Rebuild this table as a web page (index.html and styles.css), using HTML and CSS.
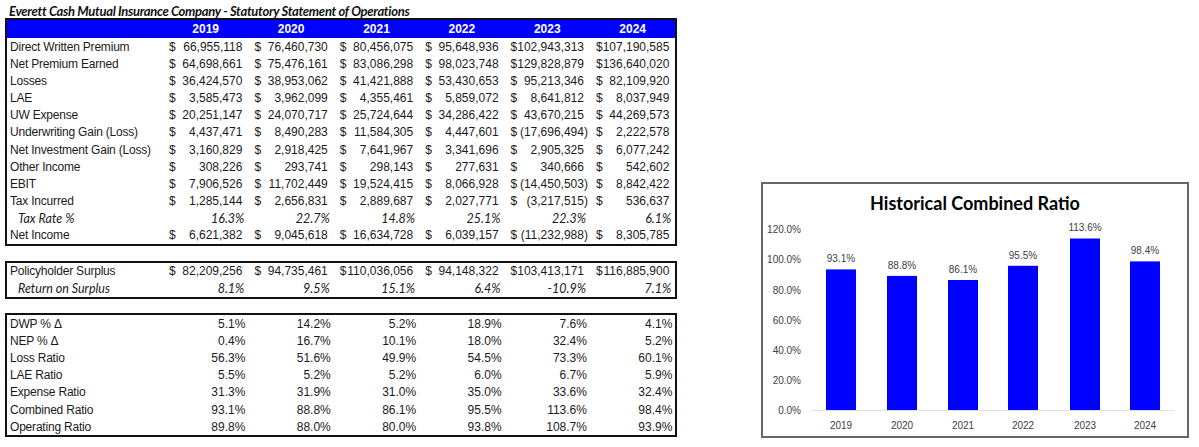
FILE: index.html
```html
<!DOCTYPE html>
<html>
<head>
<meta charset="utf-8">
<link rel="stylesheet" href="styles.css">
</head>
<body>
<div class="page">
  <div class="left">
    <h1 class="title">Everett Cash Mutual Insurance Company - Statutory Statement of Operations</h1>

    <div class="tbl t1">
      <div class="row head"><span class="lbl"></span><span>2019</span><span>2020</span><span>2021</span><span>2022</span><span>2023</span><span>2024</span></div>
      <div class="row"><span class="lbl">Direct Written Premium</span><span class="cur"><i>$</i><b>66,955,118</b></span><span class="cur"><i>$</i><b>76,460,730</b></span><span class="cur"><i>$</i><b>80,456,075</b></span><span class="cur"><i>$</i><b>95,648,936</b></span><span class="cur"><i>$</i><b>102,943,313</b></span><span class="cur"><i>$</i><b>107,190,585</b></span></div>
      <div class="row"><span class="lbl">Net Premium Earned</span><span class="cur"><i>$</i><b>64,698,661</b></span><span class="cur"><i>$</i><b>75,476,161</b></span><span class="cur"><i>$</i><b>83,086,298</b></span><span class="cur"><i>$</i><b>98,023,748</b></span><span class="cur"><i>$</i><b>129,828,879</b></span><span class="cur"><i>$</i><b>136,640,020</b></span></div>
      <div class="row"><span class="lbl">Losses</span><span class="cur"><i>$</i><b>36,424,570</b></span><span class="cur"><i>$</i><b>38,953,062</b></span><span class="cur"><i>$</i><b>41,421,888</b></span><span class="cur"><i>$</i><b>53,430,653</b></span><span class="cur"><i>$</i><b>95,213,346</b></span><span class="cur"><i>$</i><b>82,109,920</b></span></div>
      <div class="row"><span class="lbl">LAE</span><span class="cur"><i>$</i><b>3,585,473</b></span><span class="cur"><i>$</i><b>3,962,099</b></span><span class="cur"><i>$</i><b>4,355,461</b></span><span class="cur"><i>$</i><b>5,859,072</b></span><span class="cur"><i>$</i><b>8,641,812</b></span><span class="cur"><i>$</i><b>8,037,949</b></span></div>
      <div class="row"><span class="lbl">UW Expense</span><span class="cur"><i>$</i><b>20,251,147</b></span><span class="cur"><i>$</i><b>24,070,717</b></span><span class="cur"><i>$</i><b>25,724,644</b></span><span class="cur"><i>$</i><b>34,286,422</b></span><span class="cur"><i>$</i><b>43,670,215</b></span><span class="cur"><i>$</i><b>44,269,573</b></span></div>
      <div class="row"><span class="lbl">Underwriting Gain (Loss)</span><span class="cur"><i>$</i><b>4,437,471</b></span><span class="cur"><i>$</i><b>8,490,283</b></span><span class="cur"><i>$</i><b>11,584,305</b></span><span class="cur"><i>$</i><b>4,447,601</b></span><span class="cur"><i>$</i><b class="neg">(17,696,494)</b></span><span class="cur"><i>$</i><b>2,222,578</b></span></div>
      <div class="row"><span class="lbl">Net Investment Gain (Loss)</span><span class="cur"><i>$</i><b>3,160,829</b></span><span class="cur"><i>$</i><b>2,918,425</b></span><span class="cur"><i>$</i><b>7,641,967</b></span><span class="cur"><i>$</i><b>3,341,696</b></span><span class="cur"><i>$</i><b>2,905,325</b></span><span class="cur"><i>$</i><b>6,077,242</b></span></div>
      <div class="row"><span class="lbl">Other Income</span><span class="cur"><i>$</i><b>308,226</b></span><span class="cur"><i>$</i><b>293,741</b></span><span class="cur"><i>$</i><b>298,143</b></span><span class="cur"><i>$</i><b>277,631</b></span><span class="cur"><i>$</i><b>340,666</b></span><span class="cur"><i>$</i><b>542,602</b></span></div>
      <div class="row"><span class="lbl">EBIT</span><span class="cur"><i>$</i><b>7,906,526</b></span><span class="cur"><i>$</i><b>11,702,449</b></span><span class="cur"><i>$</i><b>19,524,415</b></span><span class="cur"><i>$</i><b>8,066,928</b></span><span class="cur"><i>$</i><b class="neg">(14,450,503)</b></span><span class="cur"><i>$</i><b>8,842,422</b></span></div>
      <div class="row"><span class="lbl">Tax Incurred</span><span class="cur"><i>$</i><b>1,285,144</b></span><span class="cur"><i>$</i><b>2,656,831</b></span><span class="cur"><i>$</i><b>2,889,687</b></span><span class="cur"><i>$</i><b>2,027,771</b></span><span class="cur"><i>$</i><b class="neg">(3,217,515)</b></span><span class="cur"><i>$</i><b>536,637</b></span></div>
      <div class="row ital"><span class="lbl">Tax Rate %</span><span class="pct">16.3%</span><span class="pct">22.7%</span><span class="pct">14.8%</span><span class="pct">25.1%</span><span class="pct">22.3%</span><span class="pct">6.1%</span></div>
      <div class="row"><span class="lbl">Net Income</span><span class="cur"><i>$</i><b>6,621,382</b></span><span class="cur"><i>$</i><b>9,045,618</b></span><span class="cur"><i>$</i><b>16,634,728</b></span><span class="cur"><i>$</i><b>6,039,157</b></span><span class="cur"><i>$</i><b class="neg">(11,232,988)</b></span><span class="cur"><i>$</i><b>8,305,785</b></span></div>
    </div>

    <div class="tbl t2">
      <div class="row"><span class="lbl">Policyholder Surplus</span><span class="cur"><i>$</i><b>82,209,256</b></span><span class="cur"><i>$</i><b>94,735,461</b></span><span class="cur"><i>$</i><b>110,036,056</b></span><span class="cur"><i>$</i><b>94,148,322</b></span><span class="cur"><i>$</i><b>103,413,171</b></span><span class="cur"><i>$</i><b>116,885,900</b></span></div>
      <div class="row ital"><span class="lbl">Return on Surplus</span><span class="pct">8.1%</span><span class="pct">9.5%</span><span class="pct">15.1%</span><span class="pct">6.4%</span><span class="pct">-10.9%</span><span class="pct">7.1%</span></div>
    </div>

    <div class="tbl t3">
      <div class="row"><span class="lbl">DWP % Δ</span><span class="pct">5.1%</span><span class="pct">14.2%</span><span class="pct">5.2%</span><span class="pct">18.9%</span><span class="pct">7.6%</span><span class="pct">4.1%</span></div>
      <div class="row"><span class="lbl">NEP % Δ</span><span class="pct">0.4%</span><span class="pct">16.7%</span><span class="pct">10.1%</span><span class="pct">18.0%</span><span class="pct">32.4%</span><span class="pct">5.2%</span></div>
      <div class="row"><span class="lbl">Loss Ratio</span><span class="pct">56.3%</span><span class="pct">51.6%</span><span class="pct">49.9%</span><span class="pct">54.5%</span><span class="pct">73.3%</span><span class="pct">60.1%</span></div>
      <div class="row"><span class="lbl">LAE Ratio</span><span class="pct">5.5%</span><span class="pct">5.2%</span><span class="pct">5.2%</span><span class="pct">6.0%</span><span class="pct">6.7%</span><span class="pct">5.9%</span></div>
      <div class="row"><span class="lbl">Expense Ratio</span><span class="pct">31.3%</span><span class="pct">31.9%</span><span class="pct">31.0%</span><span class="pct">35.0%</span><span class="pct">33.6%</span><span class="pct">32.4%</span></div>
      <div class="row"><span class="lbl">Combined Ratio</span><span class="pct">93.1%</span><span class="pct">88.8%</span><span class="pct">86.1%</span><span class="pct">95.5%</span><span class="pct">113.6%</span><span class="pct">98.4%</span></div>
      <div class="row"><span class="lbl">Operating Ratio</span><span class="pct">89.8%</span><span class="pct">88.0%</span><span class="pct">80.0%</span><span class="pct">93.8%</span><span class="pct">108.7%</span><span class="pct">93.9%</span></div>
    </div>
  </div>

  <div class="chart">
    <svg class="chart-svg" width="424" height="252" viewBox="0 0 424 252">
      <text class="ctitle" x="212" y="26" text-anchor="middle">Historical Combined Ratio</text>
      <g class="yl" text-anchor="end">
        <text x="38" y="49">120.0%</text>
        <text x="38" y="79">100.0%</text>
        <text x="38" y="109.5">80.0%</text>
        <text x="38" y="139.5">60.0%</text>
        <text x="38" y="170">40.0%</text>
        <text x="38" y="200">20.0%</text>
        <text x="38" y="230">0.0%</text>
      </g>
      <line x1="48" y1="226.5" x2="412" y2="226.5" stroke="#dae3f3" stroke-width="1"/>
      <g fill="#0000ff">
        <rect x="63" y="85.4" width="30" height="140.6"/>
        <rect x="124" y="91.9" width="30" height="134.1"/>
        <rect x="185" y="96" width="30" height="130"/>
        <rect x="245" y="81.8" width="30" height="144.2"/>
        <rect x="307" y="54.5" width="30" height="171.5"/>
        <rect x="367" y="77.4" width="30" height="148.6"/>
      </g>
      <g class="dl" text-anchor="middle">
        <text x="78" y="78">93.1%</text>
        <text x="139" y="84.5">88.8%</text>
        <text x="200" y="88.5">86.1%</text>
        <text x="260" y="74.5">95.5%</text>
        <text x="322" y="47">113.6%</text>
        <text x="382" y="70">98.4%</text>
      </g>
      <g class="xl" text-anchor="middle">
        <text x="78" y="245">2019</text>
        <text x="139" y="245">2020</text>
        <text x="200" y="245">2021</text>
        <text x="260" y="245">2022</text>
        <text x="322" y="245">2023</text>
        <text x="382" y="245">2024</text>
      </g>
    </svg>
  </div>
</div>
</body>
</html>
```
FILE: styles.css
```css
html, body {
  margin: 0;
  padding: 0;
  background: #ffffff;
}

.page {
  display: flex;
  align-items: flex-start;
  width: 1199px;
  height: 447px;
  overflow: hidden;
}

.left {
  padding-left: 5px;
  display: flex;
  flex-direction: column;
  width: 672.4px;
}

.title {
  margin: 0;
  padding: 4px 0 0 4px;
  height: 14px;
  font-family: "Lato", "Liberation Sans", sans-serif;
  font-weight: 700;
  font-style: italic;
  font-size: 13px;
  letter-spacing: -0.3px;
  line-height: 15px;
  color: #111;
  white-space: nowrap;
}

.tbl {
  border: 2px solid #111;
  display: grid;
  grid-template-columns: 156px repeat(6, 85.4px);
  grid-auto-rows: 17.17px;
  width: 668.4px;
}

.t1 {
  grid-template-rows: 18px;
}

.t2 {
  margin-top: 15px;
}

.t3 {
  margin-top: 14px;
}

.row {
  display: contents;
}

.row > span {
  display: flex;
  align-items: center;
  font-family: "Liberation Sans", Arial, sans-serif;
  font-size: 12px;
  color: #1a1a1a;
  white-space: nowrap;
}

.head > span {
  background: #0000ff;
  color: #ffffff;
  font-weight: 700;
  justify-content: center;
  height: 18px;
}

.row > .lbl {
  padding-left: 3px;
  font-family: "Liberation Sans", Arial, sans-serif;
  font-size: 12px;
  letter-spacing: -0.2px;
}

.cur {
  justify-content: space-between;
  padding: 0 2px 0 6px;
}

.cur i {
  font-style: normal;
}

.cur b {
  font-weight: 400;
  padding-right: 4px;
}

.cur b.neg {
  padding-right: 0;
}

.pct {
  justify-content: flex-end;
  padding-right: 3px;
}

.ital > span {
  font-style: italic;
  font-family: "Lato", "Liberation Sans", sans-serif;
  font-size: 12.5px;
}

.row.ital > .lbl {
  padding-left: 11px;
  font-family: "Lato", "Liberation Sans", sans-serif;
  font-size: 12.5px;
  letter-spacing: 0;
}

.ital > .pct {
  padding-right: 4px;
}

.chart {
  margin-left: 84px;
  margin-top: 182px;
  width: 424px;
  height: 252px;
  border: 2px solid #666;
}

.chart-svg {
  display: block;
}

.ctitle {
  font-family: "Lato", "Liberation Sans", sans-serif;
  font-weight: 700;
  font-size: 18px;
  fill: #000;
}

.yl text, .dl text, .xl text {
  font-family: "Liberation Sans", Arial, sans-serif;
  font-size: 10px;
  fill: #404040;
}
```
